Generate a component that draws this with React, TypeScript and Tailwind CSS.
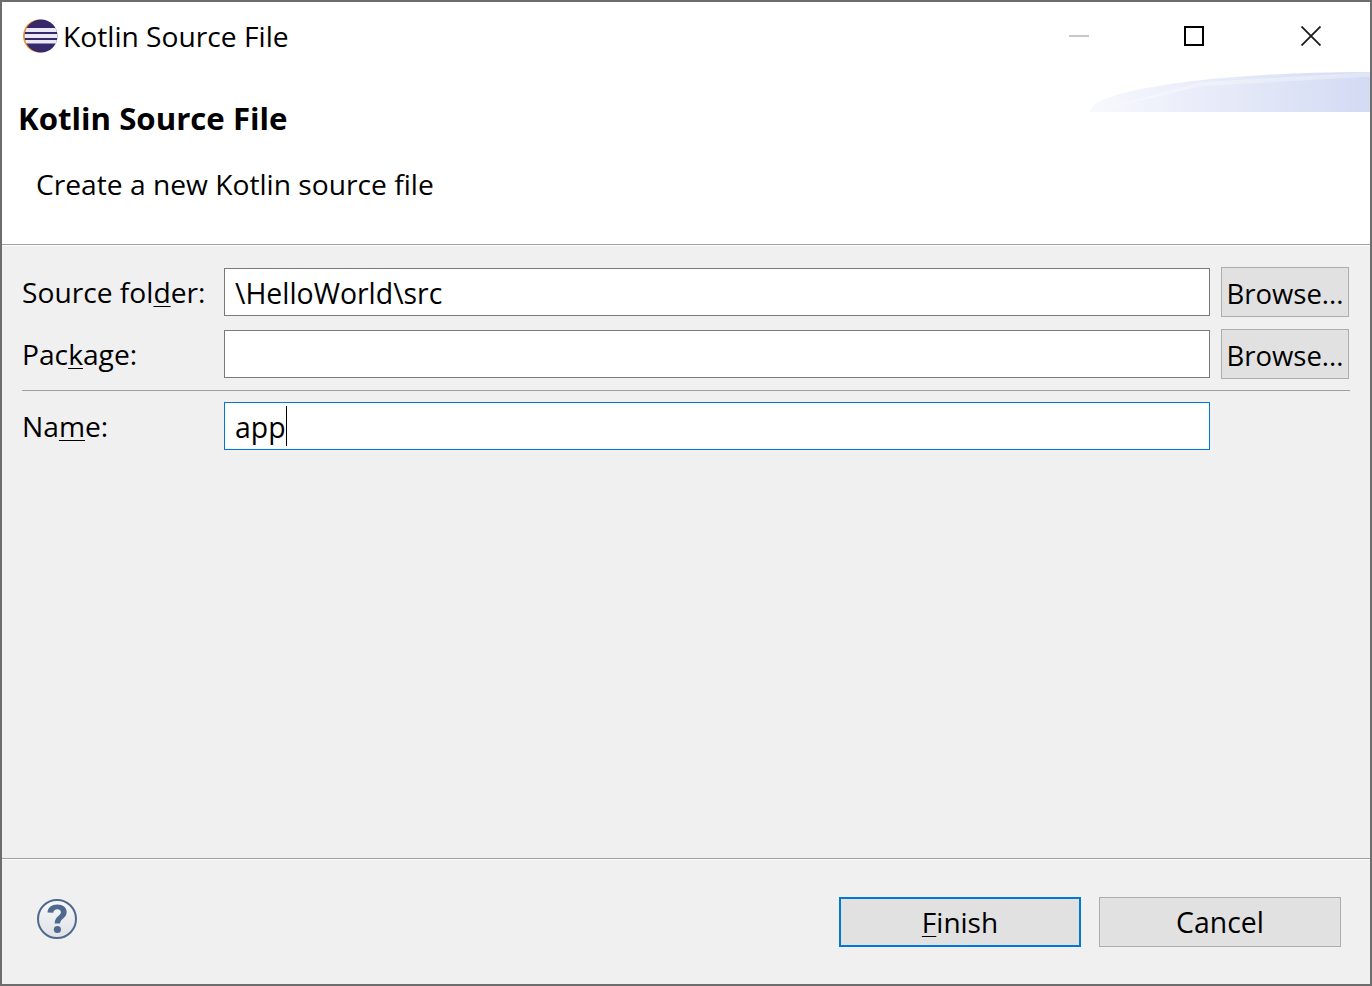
import React from "react";

const font = "font-['Open_Sans','Noto_Sans',sans-serif]";

const EclipseIcon = () => (
  <svg width="38" height="36" viewBox="0 0 38 36" className="shrink-0">
    <defs>
      <clipPath id="ball">
        <circle cx="20" cy="18" r="16.5" />
      </clipPath>
    </defs>
    <circle cx="18.5" cy="18" r="16.5" fill="#f59a2c" />
    <circle cx="20" cy="18" r="16.5" fill="#35286b" />
    <g clipPath="url(#ball)" fill="#ebe9f3">
      <rect x="0" y="10" width="38" height="4" />
      <rect x="0" y="16" width="38" height="4" />
      <rect x="0" y="22" width="38" height="3.5" />
    </g>
  </svg>
);

const HelpIcon = () => (
  <svg width="40" height="40" viewBox="0 0 40 40">
    <defs>
      <linearGradient id="helpbg" x1="0" y1="0" x2="0" y2="1">
        <stop offset="0" stopColor="#f8f8f8" />
        <stop offset="1" stopColor="#dfe1e6" />
      </linearGradient>
    </defs>
    <circle cx="20" cy="20" r="19" fill="url(#helpbg)" stroke="#4f6a8f" strokeWidth="2" />
    <path
      d="M10.5 13.5C10.8 8.4 14.8 5.5 20.3 5.5c5.6 0 9.4 3 9.4 7.5 0 6.3-6.4 6.3-6.6 11.5h-5.4c0-7.4 6.2-7.6 6.2-11.3 0-1.8-1.4-3-3.6-3-2.3 0-3.8 1.4-4 3.6z"
      fill="#4f6a8f"
    />
    <circle cx="20.4" cy="30.5" r="3.6" fill="#4f6a8f" />
  </svg>
);

const Field = ({ value, focused }: { value?: string; focused?: boolean }) => (
  <div
    className={`w-[986px] h-[48px] bg-white border pl-[10px] flex items-center text-[28.4px] leading-none text-black ${
      focused ? "border-[#0078d7]" : "border-[#7a7a7a]"
    }`}
  >
    <span className="pt-[3px]">{value}</span>
    {focused && <span className="w-px h-[40px] bg-black" />}
  </div>
);

const Browse = () => (
  <button className="w-[128px] h-[50px] pt-[3px] bg-[#e1e1e1] border border-[#adadad] text-[27.5px] text-black leading-none whitespace-nowrap">
    Browse...
  </button>
);

const U = ({ children }: { children: React.ReactNode }) => (
  <span className="underline decoration-1 underline-offset-[3px] [text-decoration-skip-ink:none]">{children}</span>
);

export default function App() {
  return (
    <div className={`w-[1372px] h-[986px] flex flex-col bg-[#f0f0f0] border-2 border-[#6d6d6d] overflow-hidden ${font}`}>
      <div className="relative h-[243px] bg-white shrink-0 flex flex-col border-b border-[#a0a0a0]">
        <div className="h-[70px] flex items-center pl-[19px] pb-[2px]">
          <EclipseIcon />
          <span className="ml-[4px] text-[28.2px] leading-none text-black">Kotlin Source File</span>
          <div className="ml-auto flex items-center">
            <div className="w-[20px] h-[2px] bg-[#c8c8c8] mr-[95px]" />
            <div className="w-[20px] h-[20px] border-2 border-black mr-[97px]" />
            <svg width="20" height="20" viewBox="0 0 20 20" className="mr-[49px]">
              <path d="M0.5 0.5L19.5 19.5M19.5 0.5L0.5 19.5" stroke="#1a1a1a" strokeWidth="1.8" />
            </svg>
          </div>
        </div>
        <div className="absolute right-0 top-[70px] w-[280px] h-[40px] bg-gradient-to-r from-[#f8f9fd] to-[#d3daf3] [clip-path:ellipse(100%_100%_at_100%_100%)]" />
        <div className="absolute right-0 top-[70px] w-[280px] h-[40px] bg-white/30 [clip-path:polygon(0_100%,40%_25%,100%_0,100%_12%,40%_35%)]" />
        <h1 className="pl-[16px] pt-[24px] text-[31.2px] leading-[44px] font-bold text-black">Kotlin Source File</h1>
        <p className="pl-[34px] pt-[24px] text-[28.2px] leading-[40px] text-black">Create a new Kotlin source file</p>
      </div>

      <div className="flex-1 flex flex-col pl-[20px] pr-[20px] pt-[21px] border-t border-white">
        <div className="flex items-center h-[50px]">
          <span className="w-[202px] text-[28.2px] leading-none text-black">
            Source fol<U>d</U>er:
          </span>
          <Field value="\HelloWorld\src" />
          <div className="ml-[11px]">
            <Browse />
          </div>
        </div>
        <div className="flex items-center h-[50px] mt-[12px]">
          <span className="w-[202px] text-[28.2px] leading-none text-black">
            Pac<U>k</U>age:
          </span>
          <Field />
          <div className="ml-[11px]">
            <Browse />
          </div>
        </div>
        <div className="h-px bg-[#a0a0a0] mt-[11px]" />
        <div className="flex items-center h-[48px] mt-[11px]">
          <span className="w-[202px] text-[28.2px] leading-none text-black">
            Na<U>m</U>e:
          </span>
          <Field value="app" focused />
        </div>
      </div>

      <div className="h-[126px] shrink-0 border-t border-[#a0a0a0] flex">
        <div className="flex-1 border-t border-white flex items-start pt-[37px] pl-[35px] pr-[29px]">
          <div className="mt-[2px]">
            <HelpIcon />
          </div>
          <button className="ml-auto w-[242px] h-[50px] bg-[#e1e1e1] border-2 border-[#0078d7] text-[28px] leading-none text-black">
            <U>F</U>inish
          </button>
          <button className="ml-[18px] w-[242px] h-[50px] bg-[#e1e1e1] border border-[#adadad] text-[28.4px] leading-none text-black">
            Cancel
          </button>
        </div>
      </div>
    </div>
  );
}
